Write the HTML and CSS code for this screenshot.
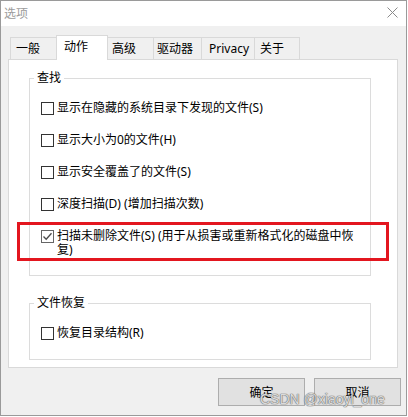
FILE: index.html
```html
<!DOCTYPE html>
<html lang="zh-CN">
<head>
    <meta charset="UTF-8">
    <meta name="viewport" content="width=device-width, initial-scale=1.0">
    <title>选项</title>
    <link rel="stylesheet" href="styles.css">
</head>
<body>
    <div class="window">
        <div class="titlebar">
            <span class="title">选项</span>
            <svg class="close" width="11" height="11" viewBox="0 0 11 11">
                <path d="M0.5 0.5 L10.5 10.5 M10.5 0.5 L0.5 10.5" stroke="#8a8a8a" stroke-width="1" fill="none"/>
            </svg>
        </div>

        <div class="tabs">
            <div class="tab">一般</div>
            <div class="tab active">动作</div>
            <div class="tab">高级</div>
            <div class="tab">驱动器</div>
            <div class="tab">Privacy</div>
            <div class="tab">关于</div>
        </div>

        <div class="panel">
            <fieldset class="group">
                <legend>查找</legend>
                <div class="opts">
                    <label class="opt"><span class="box"></span><span class="text">显示在隐藏的系统目录下发现的文件(S)</span></label>
                    <label class="opt"><span class="box"></span><span class="text">显示大小为0的文件(H)</span></label>
                    <label class="opt"><span class="box"></span><span class="text">显示安全覆盖了的文件(S)</span></label>
                    <label class="opt"><span class="box"></span><span class="text">深度扫描(D) (增加扫描次数)</span></label>
                    <label class="opt"><span class="box checked"><svg width="11" height="11" viewBox="0 0 11 11"><path d="M1.5 5.5 L4.2 8.3 L9.5 2.2" stroke="#4a4a4a" stroke-width="1.3" fill="none"/></svg></span><span class="text">扫描未删除文件(S) (用于从损害或重新格式化的磁盘中恢复)</span></label>
                </div>
            </fieldset>

            <fieldset class="group second">
                <legend>文件恢复</legend>
                <div class="opts">
                    <label class="opt"><span class="box"></span><span class="text">恢复目录结构(R)</span></label>
                </div>
            </fieldset>
        </div>

        <div class="buttons">
            <button type="button">确定</button>
            <button type="button">取消</button>
        </div>

        <div class="highlight"></div>
        <div class="watermark">CSDN @xiaoyi_one</div>
    </div>
</body>
</html>
```

FILE: styles.css
```css
body {
    margin: 0;
    padding: 0;
    background-color: #ffffff;
    font-family: "Noto Sans", "Noto Sans CJK SC", sans-serif;
    font-size: 12px;
    color: #000;
}

.window {
    position: relative;
    width: 405px;
    height: 414px;
    border: 1px solid #9a9a9a;
    background-color: #f0f0f0;
}

.titlebar {
    display: flex;
    justify-content: space-between;
    align-items: center;
    height: 25px;
    padding: 0 8px 0 3px;
    background-color: #ffffff;
}

.title {
    color: #9b9b9b;
    line-height: 16px;
}

.close {
    display: block;
    margin-top: -2px;
}

.tabs {
    display: flex;
    align-items: flex-start;
    height: 25px;
    margin-top: 9px;
    margin-bottom: -1px;
    padding-left: 9px;
}

.tab {
    box-sizing: border-box;
    height: 22px;
    margin-top: 2px;
    margin-right: -1px;
    padding-top: 3px;
    padding-left: 5px;
    line-height: 16px;
    white-space: nowrap;
    border: 1px solid #d9d9d9;
    border-bottom: none;
    background-color: #f0f0f0;
}

.tab:nth-child(1) { width: 47px; }
.tab:nth-child(2) { width: 52px; padding-left: 7px; }
.tab:nth-child(3) { width: 47px; padding-left: 4px; }
.tab:nth-child(4) { width: 49px; padding-left: 3px; }
.tab:nth-child(5) { width: 54px; padding-left: 7px; }
.tab:nth-child(6) { width: 46px; }

.tab.active {
    position: relative;
    z-index: 1;
    height: 25px;
    margin-top: 0;
    background-color: #ffffff;
}

.panel {
    box-sizing: border-box;
    width: 390px;
    margin-left: 7px;
    padding: 11px 0 7px 20px;
    background-color: #ffffff;
    border: 1px solid #d9d9d9;
}

.group {
    box-sizing: border-box;
    width: 342px;
    min-width: 0;
    margin: 0;
    padding: 16px 0 18px 0;
    border: 1px solid #dcdcdc;
}

.group.second {
    margin-top: 20px;
    padding-bottom: 19px;
}

.group legend {
    margin-left: 4px;
    padding: 0 3px;
    line-height: 14px;
}

.opts {
    padding: 0 8px 0 11px;
}

.opt {
    display: flex;
    align-items: flex-start;
    gap: 3px;
    line-height: 14px;
    margin-bottom: 18px;
}

.opt:last-child {
    margin-bottom: 0;
}

.box {
    flex: none;
    box-sizing: border-box;
    width: 13px;
    height: 13px;
    margin-top: 1px;
    border: 1px solid #333333;
    background-color: #ffffff;
}

.box.checked {
    border-color: #666666;
}

.box svg {
    display: block;
}

.text {
    flex: 1;
}

.buttons {
    display: flex;
    justify-content: flex-end;
    gap: 9px;
    margin-top: 10px;
    padding-right: 5px;
}

button {
    box-sizing: border-box;
    width: 87px;
    height: 28px;
    padding: 0;
    font-family: inherit;
    font-size: 12px;
    color: #000;
    background-color: #e1e1e1;
    border: 1px solid #adadad;
}

.highlight {
    position: absolute;
    left: 16px;
    top: 221px;
    box-sizing: border-box;
    width: 372px;
    height: 39px;
    border: 3px solid #e3161f;
}

.watermark {
    position: absolute;
    left: 259px;
    top: 391px;
    font-family: "Liberation Sans", Arial, sans-serif;
    font-size: 14px;
    line-height: 14px;
    color: rgba(255, 255, 255, 0.75);
    text-shadow: 0 0 1px #707070, 0 0 1px #707070, 0 0 1px #707070;
    white-space: nowrap;
}
```
